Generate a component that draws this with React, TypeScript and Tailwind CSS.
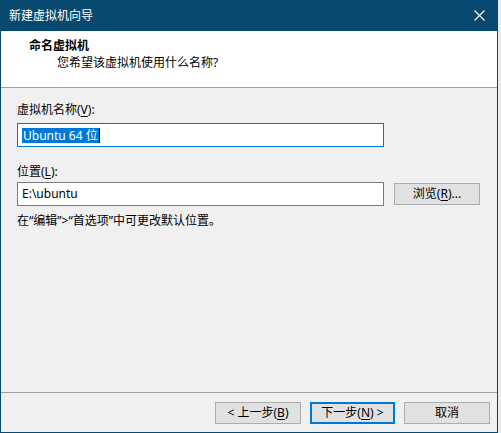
import React from "react";

const font = {
  fontFamily: '"Noto Sans", "Noto Sans CJK SC", sans-serif',
};

function Key({ k }: { k: string }) {
  return <span className="underline underline-offset-2">{k}</span>;
}

function Button({
  children,
  primary,
}: {
  children: React.ReactNode;
  primary?: boolean;
}) {
  return (
    <button
      type="button"
      className={`flex h-[22px] items-center justify-center bg-[#e1e1e1] text-[12px] leading-none text-black ${
        primary ? "w-[85px] border-2 border-[#0078d7]" : "w-[86px] border border-[#adadad]"
      }`}
    >
      {children}
    </button>
  );
}

export default function App() {
  return (
    <div className="flex h-[433px] w-[501px] bg-[#ececec]" style={font}>
      {/* 对话框窗口 */}
      <div className="flex h-[433px] w-[498px] flex-col bg-[#08496f] px-px pb-px">
        {/* 标题栏 */}
        <div className="-mx-px flex h-[31px] items-center justify-between pl-[9px] pr-[9px]">
          <span className="text-[12px] text-white">新建虚拟机向导</span>
          <svg width="11" height="11" viewBox="0 0 11 11" className="mr-[4px]">
            <path d="M0.5 0.5 L10.5 10.5 M10.5 0.5 L0.5 10.5" stroke="#ffffff" strokeWidth="1.1" />
          </svg>
        </div>

        {/* 页眉 */}
        <div className="h-[57px] border-b border-[#a0a0a0] bg-white pl-[28px] pt-[7px]">
          <div className="text-[12px] font-bold leading-[16px] text-black">命名虚拟机</div>
          <div className="mt-[1px] pl-[28px] text-[12px] leading-[16px] text-black">
            您希望该虚拟机使用什么名称?
          </div>
        </div>

        {/* 内容 */}
        <div className="flex flex-1 flex-col bg-[#f0f0f0] px-[16px] pt-[14px] text-[12px] text-black">
          <div className="leading-[16px]">
            虚拟机名称(<Key k="V" />):
          </div>
          <div className="mt-[5px] flex h-[24px] w-[367px] items-center border border-[#0078d7] bg-white pl-[4px]">
            <span className="bg-[#0078d7] px-px leading-[15px] text-white">Ubuntu 64 位</span>
            <span className="h-[15px] w-px bg-black" />
          </div>

          <div className="mt-[17px] leading-[16px]">
            位置(<Key k="L" />):
          </div>
          <div className="mt-[2px] flex items-center gap-[10px]">
            <div className="flex h-[24px] w-[367px] items-center border border-[#7a7a7a] bg-white pl-[4px]">
              E:\ubuntu
            </div>
            <Button>
              浏览(<Key k="R" />)...
            </Button>
          </div>

          <div className="mt-[7px] leading-[16px]">在“编辑”&gt;“首选项”中可更改默认位置。</div>
        </div>

        {/* 底部按钮 */}
        <div className="flex h-[40px] justify-end gap-[9px] border-t border-[#a0a0a0] bg-[#f0f0f0] pr-[7px] pt-[9px]">
          <Button>
            &lt; 上一步(<Key k="B" />)
          </Button>
          <Button primary>
            下一步(<Key k="N" />) &gt;
          </Button>
          <Button>取消</Button>
        </div>
      </div>
    </div>
  );
}
